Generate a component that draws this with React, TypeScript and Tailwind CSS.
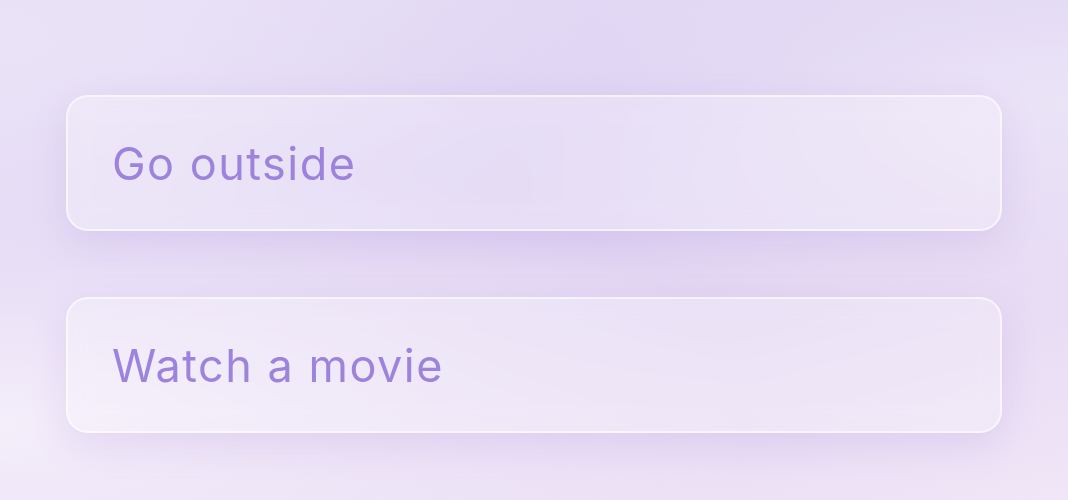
const tasks = ["Go outside", "Watch a movie"];

function TaskCard({ label }: { label: string }) {
  return (
    <div className="flex h-[136px] items-center rounded-[22px] border-2 border-white/60 bg-white/25 pl-[44px] shadow-[0_12px_36px_rgba(150,110,210,0.16)] backdrop-blur-md">
      <span className="font-['Inter','Open_Sans',sans-serif] text-[45px] font-normal leading-none tracking-[1.5px] text-[#9d83dc]">
        {label}
      </span>
    </div>
  );
}

export default function App() {
  return (
    <div className="relative h-[500px] w-full overflow-hidden bg-[linear-gradient(165deg,#e6ddf5_0%,#dcd0f2_35%,#e4d8f3_65%,#f1e6f7_100%)]">
      <div className="pointer-events-none absolute inset-0 bg-[radial-gradient(ellipse_at_0%_85%,rgba(246,240,251,0.9)_0%,rgba(246,240,251,0)_50%)]" />
      <div className="pointer-events-none absolute inset-0 bg-[radial-gradient(ellipse_at_0%_10%,rgba(236,230,248,0.8)_0%,rgba(236,230,248,0)_40%)]" />
      <div className="pointer-events-none absolute inset-0 bg-[radial-gradient(ellipse_at_100%_20%,rgba(238,232,248,0.8)_0%,rgba(238,232,248,0)_40%)]" />
      <div className="relative flex flex-col gap-[66px] px-[66px] pt-[95px]">
        {tasks.map((t) => (
          <TaskCard key={t} label={t} />
        ))}
      </div>
    </div>
  );
}
